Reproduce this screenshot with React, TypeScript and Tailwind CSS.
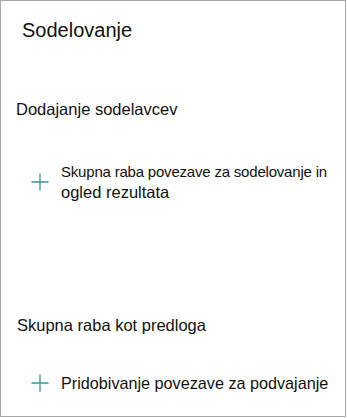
import React from 'react';

function PlusIcon() {
  return (
    <svg width="18" height="18" viewBox="0 0 18 18" className="shrink-0" aria-hidden="true">
      <path d="M9 0.5V17.5M0.5 9H17.5" stroke="#3a9494" strokeWidth="1.3" fill="none" />
    </svg>
  );
}

export default function App() {
  return (
    <div className="w-[346px] h-[417px] border border-[#a6a6a6] bg-white text-[#111] font-['Liberation_Sans',Arial,sans-serif]">
      <h1 className="ml-[21px] mt-[15px] text-[20px] leading-[28px] font-normal">Sodelovanje</h1>

      {/* Collaborators */}
      <h2 className="ml-[15px] mt-[53px] text-[16.5px] leading-[24px] font-normal">Dodajanje sodelavcev</h2>
      <button className="mt-[40px] ml-[30px] flex items-center gap-[12px] text-left">
        <PlusIcon />
        <span className="flex flex-col whitespace-nowrap">
          <span className="text-[15px] leading-[21px] tracking-[-0.2px]">
            Skupna raba povezave za sodelovanje in
          </span>
          <span className="text-[16.5px] leading-[21px]">ogled rezultata</span>
        </span>
      </button>

      {/* Template */}
      <h2 className="ml-[16px] mt-[110px] text-[16.5px] leading-[24px] font-normal">Skupna raba kot predloga</h2>
      <button className="mt-[35px] ml-[30px] flex items-center gap-[12px] text-left">
        <PlusIcon />
        <span className="text-[16.2px] leading-[22px] whitespace-nowrap">
          Pridobivanje povezave za podvajanje
        </span>
      </button>
    </div>
  );
}
